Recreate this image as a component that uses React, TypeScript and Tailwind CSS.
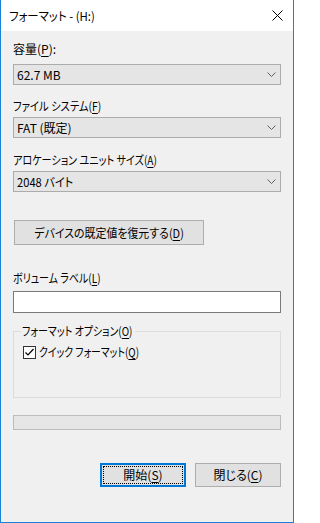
import React from "react";

const U = ({ c }: { c: string }) => <span className="underline underline-offset-[2px] decoration-[1px]">{c}</span>;

const Chevron = () => (
  <svg width="9" height="5" viewBox="0 0 9 5" className="shrink-0">
    <polyline points="0.5,0.5 4.5,4.5 8.5,0.5" fill="none" stroke="#606060" strokeWidth="1" />
  </svg>
);

const Combo = ({ children, mt }: { children: React.ReactNode; mt: string }) => (
  <div className={`${mt} h-[21px] w-full border border-[#acacac] bg-[#e5e5e5] flex items-center justify-between pl-[3px] pr-[4px]`}>
    <span className="leading-[16px] whitespace-nowrap">{children}</span>
    <Chevron />
  </div>
);

export default function App() {
  return (
    <div
      className="w-[294px] h-[523px] border-x border-b border-[#1883d7] bg-[#f0f0f0] flex flex-col text-[12px] text-black [font-feature-settings:'palt'] overflow-hidden"
      style={{ fontFamily: '"Noto Sans CJK JP", "Noto Sans", sans-serif' }}
    >
      <div className="h-[31px] bg-white flex items-center justify-between pl-[8px] pr-[10px] shrink-0">
        <span className="leading-[16px] inline-block whitespace-nowrap scale-x-[0.95] origin-left">フォーマット - (H:)</span>
        <svg width="11" height="11" viewBox="0 0 11 11">
          <line x1="0.5" y1="0.5" x2="10.5" y2="10.5" stroke="#000" strokeWidth="1" />
          <line x1="10.5" y1="0.5" x2="0.5" y2="10.5" stroke="#000" strokeWidth="1" />
        </svg>
      </div>
      <div className="flex-1 flex flex-col px-[12px]">
        <div className="mt-[10px] leading-[16px] h-[16px]">
          容量(<U c="P" />):
        </div>
        <Combo mt="mt-[7px]">62.7 MB</Combo>
        <div className="mt-[13px] leading-[16px] h-[16px]">
          <span className="inline-block whitespace-nowrap scale-x-[0.86] origin-left">
            ファイル システム(<U c="F" />)
          </span>
        </div>
        <Combo mt="mt-[3px]">FAT (既定)</Combo>
        <div className="mt-[14px] leading-[16px] h-[16px]">
          <span className="inline-block whitespace-nowrap scale-x-[0.84] origin-left">
            アロケーション ユニット サイズ(<U c="A" />)
          </span>
        </div>
        <Combo mt="mt-[3px]">
          <span className="inline-block scale-x-[0.93] origin-left">2048 バイト</span>
        </Combo>
        <div className="mt-[28px] ml-[1px] w-[190px] h-[25px] border border-[#adadad] bg-[#e1e1e1] flex items-center justify-center">
          <span className="leading-[16px] inline-block whitespace-nowrap scale-x-[0.91] origin-center">
            デバイスの既定値を復元する(<U c="D" />)
          </span>
        </div>
        <div className="mt-[25px] leading-[16px] h-[16px]">
          <span className="inline-block whitespace-nowrap scale-x-[0.83] origin-left">
            ボリューム ラベル(<U c="L" />)
          </span>
        </div>
        <div className="mt-[5px] h-[22px] w-full border border-[#7a7a7a] bg-white" />
        <fieldset className="mt-[10px] h-[75px] border border-[#dcdcdc] p-0 min-w-0">
          <legend className="ml-[7px] w-[114px] px-[1px] leading-[16px] text-black whitespace-nowrap">
            <span className="inline-block scale-x-[0.83] origin-left">
              フォーマット オプション(<U c="O" />)
            </span>
          </legend>
          <div className="mt-[5px] ml-[9px] flex items-center">
            <div className="w-[13px] h-[13px] border border-[#333333] bg-white flex items-center justify-center shrink-0">
              <svg width="11" height="11" viewBox="0 0 11 11">
                <polyline points="1.5,5.5 4,8 9.5,2" fill="none" stroke="#000" strokeWidth="1.2" />
              </svg>
            </div>
            <span className="ml-[3px] leading-[16px] inline-block whitespace-nowrap scale-x-[0.82] origin-left">
              クイック フォーマット(<U c="Q" />)
            </span>
          </div>
        </fieldset>
        <div className="mt-[17px] h-[15px] w-full border border-[#bcbcbc] bg-[#e6e6e6]" />
        <div className="mt-[33px] flex justify-end gap-[9px]">
          <div className="w-[86px] h-[24px] border-2 border-[#0078d7] bg-[#e1e1e1] p-[1px]">
            <div className="w-full h-full border border-dotted border-black flex items-center justify-center">
              <span className="leading-[16px]">開始(<U c="S" />)</span>
            </div>
          </div>
          <div className="w-[86px] h-[24px] border border-[#adadad] bg-[#e1e1e1] flex items-center justify-center">
            <span className="leading-[16px]">閉じる(<U c="C" />)</span>
          </div>
        </div>
      </div>
    </div>
  );
}
